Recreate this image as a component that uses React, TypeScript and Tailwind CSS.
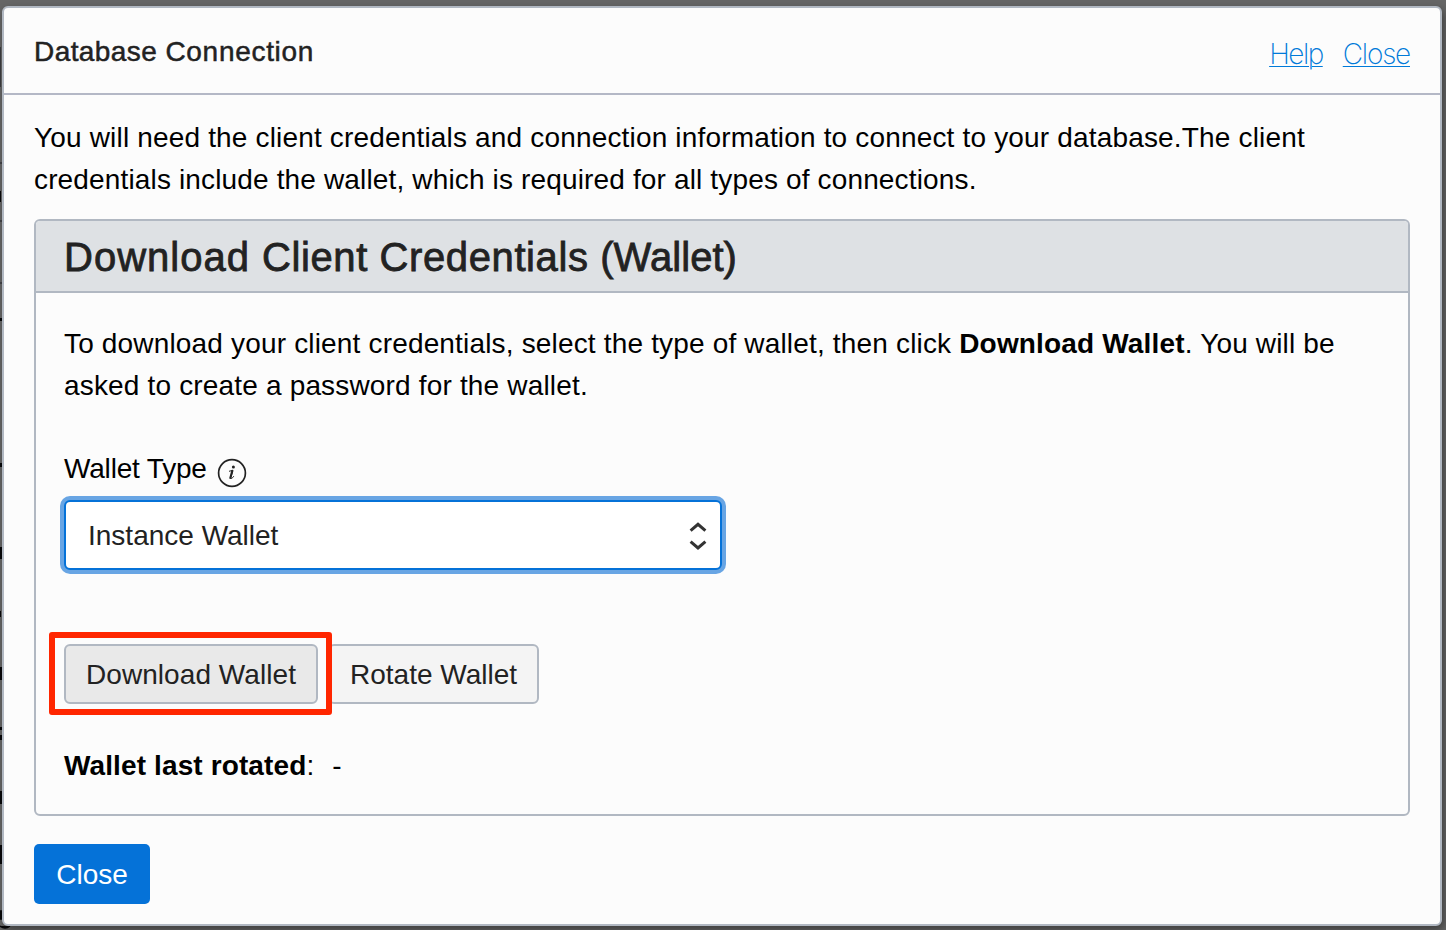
import React from "react";

function Edge() {
  const marks: [number, number, number][] = [
    [47, 40, 1], [191, 11, 1], [318, 3, 2], [463, 4, 2], [547, 12, 2], [611, 6, 1], [667, 13, 2],
    [727, 3, 2], [735, 5, 2], [791, 13, 2], [845, 19, 2],
  ];
  return (
    <svg className="absolute left-0 top-0" width="12" height="930" aria-hidden="true">
      {[162, 220, 282].map((y) => (
        <rect key={y} x="0" y={y} width="2" height="2" fill="#444448" />
      ))}
      {marks.map(([y, h, w]) => (
        <rect key={y} x="0" y={y} width={w} height={h} fill={y === 47 ? "#3b3d40" : "#08080a"} />
      ))}
      <path d="M0 911 h2 v8 h-2 Z M0 926 Q5 930 10 926" fill="#08080a" stroke="#08080a" strokeWidth="1.5" />
    </svg>
  );
}

function InfoIcon() {
  return (
    <svg width="30" height="30" viewBox="0 0 30 30" className="shrink-0" aria-hidden="true">
      <circle cx="15" cy="15" r="13.4" fill="none" stroke="#222" strokeWidth="1.7" />
      <circle cx="16.4" cy="8.9" r="1.5" fill="#222" />
      <path d="M12 13.3 L15.9 12.3 L13.9 19.4 Q13.6 20.9 14.5 20.5 Q15.6 20 16.8 18.2" fill="none" stroke="#222" strokeWidth="1" strokeLinejoin="round" />
      <path d="M15.3 12.9 L13.3 20" stroke="#222" strokeWidth="2.1" strokeLinecap="round" />
    </svg>
  );
}

export default function App() {
  return (
    <div className="relative h-[930px] w-[1446px] overflow-hidden bg-[#666666] pl-[2px] pt-[6px] font-['Liberation_Sans',Arial,sans-serif] text-[28px] leading-[42px] text-black">
      <Edge />
      <div className="relative flex h-[920px] w-[1440px] flex-col rounded-[6px] border-2 border-[#b1b8c2] bg-[#fcfcfc] shadow-[2px_4px_8px_rgba(0,0,0,0.4)]">
        <header className="flex h-[87px] shrink-0 items-center justify-between border-b-2 border-[#b4b8c6] px-[30px]">
          <h1 className="whitespace-nowrap pt-0.5 text-[28px] text-[#222] [-webkit-text-stroke:0.5px_#222]">
            <span className="tracking-[0.42px]">Database </span>
            <span className="tracking-[0.7px]">Connection</span>
          </h1>
          <nav className="flex gap-5 pt-[7px] font-['Inter',sans-serif] font-extralight text-[#007ad9]">
            <a className="tracking-[-1.5px] underline decoration-1 underline-offset-2">Help</a>
            <a className="tracking-[-1.2px] underline decoration-1 underline-offset-2">Close</a>
          </nav>
        </header>
        <main className="flex flex-col items-start px-[30px] pt-[22px]">
          <p className="whitespace-nowrap tracking-[0.17px]">
            You will need the client credentials and connection information to connect to your database.The client
            <br />
            <span className="tracking-[0.15px]">credentials include the wallet, which is required for all types of connections.</span>
          </p>
          <section className="mt-[18px] h-[597px] w-[1376px] rounded-[6px] border-2 border-[#b1b8c2]">
            <h2 className="flex h-[72px] items-center rounded-t-[4px] border-b-2 border-[#b1b8c2] bg-[#dee1e4] px-7 pt-px text-[40px] text-[#222] [-webkit-text-stroke:0.8px_#222]">
              <span className="whitespace-nowrap tracking-[0.6px]">
                <span className="tracking-[1px]">Download </span>Client Credentials <span className="tracking-[0.06px]">(Wallet)</span>
              </span>
            </h2>
            <div className="flex flex-col items-start px-7 pt-[30px]">
              <p className="whitespace-nowrap tracking-[0.17px]">
                To download your client credentials, select the type of wallet, then click <b>Download Wallet</b>. You will be
                <br />
                asked to create a password for the wallet.
              </p>
              <div className="mt-[41px] flex h-[42px] items-center gap-[10px]">
                <span className="tracking-[-0.18px]">Wallet Type</span>
                <span className="pt-[7px]"><InfoIcon /></span>
              </div>
              <div className="mt-[10px] flex h-[70px] w-[658px] items-center justify-between rounded-[6px] border-2 border-[#0572d8] bg-white pl-[22px] pr-3 pt-px text-[#222] shadow-[0_0_0_4px_#68a5e4]">
                <span>Instance Wallet</span>
                <svg width="20" height="30" viewBox="0 0 20 30" fill="none" stroke="#333" strokeWidth="3" aria-hidden="true">
                  <path d="M2.6 9.7 L10 3.3 L17.4 9.7 M2.6 20.6 L10 27 L17.4 20.6" />
                </svg>
              </div>
              <div className="relative mt-[74px] flex gap-[10px] text-[#222]">
                <button className="h-[60px] w-[254px] whitespace-nowrap rounded-[6px] border-2 border-[#b1b8c2] bg-[#e9e9e9] pt-0.5 tracking-[0.06px]">Download Wallet</button>
                <button className="h-[60px] w-[211px] whitespace-nowrap rounded-[6px] border-2 border-[#b1b8c2] bg-[#f4f4f4] pt-0.5">Rotate Wallet</button>
                <div className="absolute -left-[15px] -top-[12px] h-[83px] w-[283px] rounded-[3px] border-6 border-[#ff2600]" />
              </div>
              <p className="mt-[41px] flex gap-[18px] whitespace-nowrap tracking-[0.12px]">
                <span><b>Wallet last rotated</b>:</span>
                <span>-</span>
              </p>
            </div>
          </section>
          <button className="mt-7 h-[60px] w-[116px] rounded-[5px] bg-[#0572d8] pt-0.5 text-white">Close</button>
        </main>
      </div>
    </div>
  );
}
